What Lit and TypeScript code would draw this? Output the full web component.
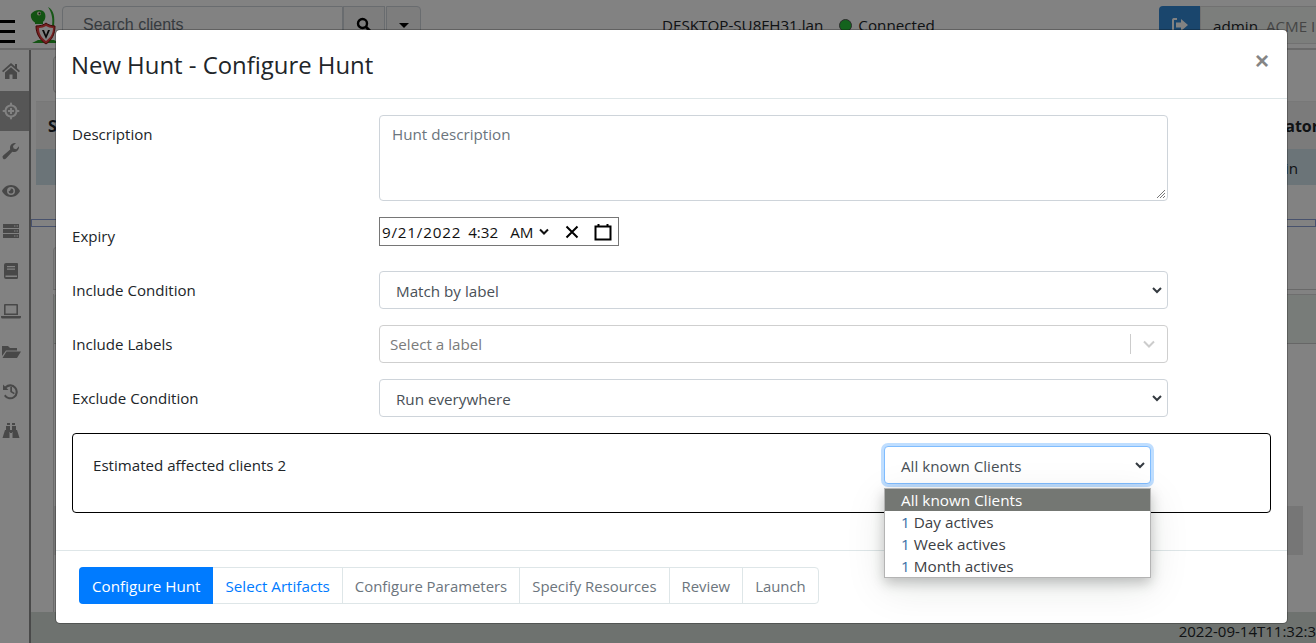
import { LitElement, html, css, svg, unsafeCSS } from "lit";
import { customElement } from "lit/decorators.js";

const FONT = unsafeCSS(`"Open Sans", "Noto Sans", sans-serif`);

const sideIcons = [
  svg`<path d="M10 2 1 10l1.2 1.2L10 4.6l7.8 6.6L19 10l-3-2.7V3h-2v2.6zM4 11.5V18h4.5v-4.5h3V18H16v-6.5L10 6.3z"/>`,
  svg`<path fill-rule="evenodd" d="M10 1.5a1 1 0 0 1 1 1v1.1A6.6 6.6 0 0 1 16.4 9h1.1a1 1 0 0 1 0 2h-1.1a6.6 6.6 0 0 1-5.4 5.4v1.1a1 1 0 0 1-2 0v-1.1A6.6 6.6 0 0 1 3.6 11H2.5a1 1 0 0 1 0-2h1.1A6.6 6.6 0 0 1 9 3.6V2.5a1 1 0 0 1 1-1zM10 5.5a4.5 4.5 0 1 0 0 9 4.5 4.5 0 0 0 0-9zM9 7h2v2h2v2h-2v2H9v-2H7V9h2z"/>`,
  svg`<path d="M18 5.5a5 5 0 0 1-6.700 5.200L5 17.500a2 2 0 0 1-3-.1 2 2 0 0 1 .2-2.800l7-6.200A5 5 0 0 1 15 2l-3 3 .6 2.600 2.600.6 2.800-3z"/>`,
  svg`<path fill-rule="evenodd" d="M10 4c4.300 0 7.600 2.800 9 6-1.400 3.200-4.700 6-9 6s-7.600-2.800-9-6c1.400-3.200 4.700-6 9-6zm0 2a4 4 0 1 0 0 8 4 4 0 0 0 0-8zm-.2 1.500a2.500 2.500 0 1 1-2.300 2.700c.8.500 2.300-.6 2.300-2.700z"/>`,
  svg`<path fill-rule="evenodd" d="M2 3h16v4H2zm0 5h16v4H2zm0 5h16v4H2zM13 4.500v1h1.500v-1zm2.500 0v1H17v-1zM13 9.500v1h1.500v-1zm2.500 0v1H17v-1zM13 14.500v1h1.500v-1zm2.500 0v1H17v-1z"/>`,
  svg`<path fill-rule="evenodd" d="M5 2h11a1 1 0 0 1 1 1v13.500a1.500 1.500 0 0 1-1 1.500H5a2 2 0 0 1-2-2V4a2 2 0 0 1 2-2zm1 3v1.200h8V5zm0 2.500v1.200h8V7.500zM4.500 14.500V16H16v-1.500z"/>`,
  svg`<path fill-rule="evenodd" d="M4 3h12a1 1 0 0 1 1 1v10H3V4a1 1 0 0 1 1-1zm.6 1.500v8h10.800v-8zM0 15h20v1a1.500 1.500 0 0 1-1.500 1.500h-17A1.500 1.500 0 0 1 0 16z"/>`,
  svg`<path d="M1 5h6l2 2h7v2.500H5L1 15zM1.500 17 5.500 10.500H20L16 17z"/>`,
  svg`<path d="M2 3.500 4 5.500A7.500 7.500 0 1 1 3 15l1.500-1.500A5.400 5.400 0 1 0 5.500 7l2 2H2zM9.300 6h1.700v4.200l2.800 1.700-.9 1.400-3.600-2.200z"/>`,
  svg`<path d="M6 2h3v2H6zm5 0h3v2h-3zM5 5h4v6H5zm6 0h4v6h-4zM9 9h2v3H9zM4 9h4.500v8H1.500zm7.500 0H16l2.500 8h-7z"/>`,
];

@customElement("app-root")
export class AppRoot extends LitElement {
  static styles = css`
    :host {
      display: block;
      position: relative;
      width: 1316px;
      height: 643px;
      overflow: hidden;
      font-family: ${FONT};
      background: #fff;
      color: #212529;
    }
    * { box-sizing: border-box; }

    /* page behind the dialog */
    .page { display: flex; flex-direction: column; height: 643px; background: #fff; }
    .nav { height: 50px; display: flex; align-items: flex-start; background: #fff; border-top: 1px solid #fff; border-bottom: 2px solid #d0d0d0; flex: none; }
    .burger { width: 30px; height: 47px; display: flex; flex-direction: column; gap: 7.5px; padding: 19px 0 0 0; flex: none; }
    .burger i { display: block; width: 15px; height: 2.5px; background: #000; }
    .logo { width: 32px; height: 40px; margin: 5px 0 0 0; flex: none; }
    .search { display: flex; margin: 5px 0 0 0; height: 38px; flex: none; }
    .search .inp { width: 281px; border: 1px solid #ced4da; border-radius: 4px 0 0 4px; background: #fff; padding: 9px 20px; font: 16px "Liberation Sans", sans-serif; color: #6c757d; }
    .search .btn { width: 42px; border: 1px solid #ced4da; background: #f5f5f5; display: flex; align-items: center; justify-content: center; }
    .search .cart { width: 35px; margin-left: 1px; border: 1px solid #ced4da; border-radius: 0 4px 4px 0; background: #f5f5f5; display: flex; justify-content: center; align-items: center; }
    .cart i { border: 5px solid transparent; border-top-color: #000; border-bottom: 0; display: block; }
    .host { margin: 14px 0 0 241px; font-size: 15.2px; color: #212529; white-space: nowrap; width: 497px; display: flex; gap: 16px; flex: none; }
    .dot { display: inline-block; width: 13px; height: 13px; background: #28c23a; border-radius: 50%; border: 1px solid #555; margin: 0 6px 0 0; vertical-align: -1px; }
    .logout { width: 41px; height: 38px; background: #3489d6; margin: 5px 0 0 0; border-radius: 4px 0 0 4px; display: flex; justify-content: center; align-items: center; flex: none; }
    .user { flex: none; width: 117px; height: 38px; margin-top: 5px; background: #f4f8f4; border: 1px solid #ddd; font-size: 15.2px; padding: 9px 12px; white-space: nowrap; overflow: hidden; }
    .user span { color: #888; margin-left: 4px; }

    .main { flex: 1; display: flex; min-height: 0; }
    .side { width: 31px; border-right: 2px solid #909090; background: #fff; flex: none; padding-top: 1px; display: flex; flex-direction: column; }
    .side div { height: 40px; display: flex; align-items: center; justify-content: center; padding-right: 8px; }
    .side svg { width: 20px; height: 20px; fill: #8e8e8e; }
    .side div.on { background: #a9a9a9; }
    .side div.on svg { fill: #fff; }
    .content { flex: 1; display: flex; flex-direction: column; min-width: 0; }
    .upper { height: 169px; padding: 51px 0 0 5px; flex: none; position: relative; }
    .tool { position: absolute; left: 22px; top: 6px; width: 40px; height: 37px; border: 1px solid #ccc; border-radius: 4px; background: #f5f5f5; }
    .thead { height: 48px; background: #f2f2f2; border-top: 1px solid #ececec; font-size: 16px; font-weight: 700; color: #212529; display: flex; justify-content: space-between; padding: 13px 0 0 12px; white-space: nowrap; overflow: visible; }
    .thead span:last-child { margin-right: -3px; }
    .trow { height: 36px; background: #d3e4ec; font-size: 15.2px; display: flex; justify-content: flex-end; padding: 9px 18px 0 0; }
    .lower { flex: 1; background: #fff; display: flex; flex-direction: column; min-height: 0; }
    .bluebar { height: 8px; border: 1px solid #8ea2d6; flex: none; }
    .tabs { height: 43px; margin: 20px 0 0 22px; border-bottom: 1px solid #cfcfcf; flex: none; }
    .tab { width: 40px; height: 42px; border: 1px solid #d8d8d8; border-bottom: 0; border-radius: 4px 4px 0 0; background: #f6f6f6; }
    .panel { flex: 1; margin: 4px 0 0 22px; border-left: 1px solid #d0d0d0; display: flex; flex-direction: column; }
    .phead { height: 50px; flex: none; background: #ecf3ee; border-bottom: 1px solid #c8c8c8; border-top: 1px solid #d8d8d8; border-radius: 4px 0 0 0; }
    .pblock { height: 49px; margin: 162px 13px 0 0; background: #e8e8e8; flex: none; }
    .foot { height: 31px; background: #d8e0da; font-size: 15px; text-align: right; white-space: nowrap; flex: none; padding-top: 9px; overflow: hidden; margin-left: 0; }

    /* dialog layer */
    .backdrop { position: absolute; inset: 0; background: rgba(0, 0, 0, 0.49); }
    .modal {
      position: absolute; left: 55px; top: 29px; width: 1233px; height: 595px;
      background: #fff; border-radius: 5px; border: 1px solid rgba(0,0,0,.25);
      display: flex; flex-direction: column; background-clip: padding-box;
    }
    .mhead { height: 69px; flex: none; border-bottom: 1px solid #dee6e8; display: flex; justify-content: space-between; padding: 19px 16px 0 16px; }
    h5 { margin: 0 0 0 -1px; font-size: 23.9px; font-weight: 500; line-height: 32px; color: #212529; }
    .close { font-size: 24px; line-height: 24px; color: #858585; font-weight: 700; font-family: "Liberation Sans", sans-serif; margin: 0 2px 0 0; }
    .mbody { flex: 1; padding: 16px 16px 0 16px; display: flex; flex-direction: column; }
    .row { display: grid; grid-template-columns: 307px 789px; margin-bottom: 16px; }
    .row label { padding-top: 7px; color: #212529; font-size: 15.1px; line-height: 24px; }
    .ctl { height: 38px; border: 1px solid #ced4da; border-radius: 4px; display: flex; align-items: center; justify-content: space-between; padding: 0 4px 0 16px; color: #495057; font-size: 15.2px; background: #fff; }
    .ctl > span:first-child { padding-top: 2px; }
    .ctl svg { width: 10px; height: 10px; fill: none; stroke: #343a40; stroke-width: 2; margin-right: 1px; }
    .area { height: 86px; border: 1px solid #ced4da; border-radius: 4px; padding: 8px 12px; color: #6c757d; font-size: 15.2px; position: relative; }
    .grip { position: absolute; right: 1px; bottom: 1px; width: 10px; height: 10px; }
    .date { width: 240px; height: 29px; border: 1px solid #767676; display: flex; align-items: center; padding-left: 2px; font-size: 15.2px; color: #111; white-space: nowrap; }
    .date .d { letter-spacing: .8px; }
    .date .tm { margin-left: 7px; }
    .date .ap { margin-left: 12px; }
    .date svg { flex: none; }
    .date .chev { margin-left: 5px; }
    .date .clr { margin-left: 15px; }
    .date .cal { margin-left: 15px; }
    .exp { margin-bottom: 23px; }
    .exp label { padding-top: 7px; }
    .labels { padding: 0 0 0 10px; color: #7b7b7b; border-color: #cfcfcf; }
    .labels > span:first-child { padding-top: 0; }
    .labels .r { display: flex; align-items: center; height: 100%; }
    .labels .sep { width: 1px; height: 20px; background: #ccc; margin-right: 12px; }
    .labels svg { stroke: #ccc; margin-right: 12px; width: 12px; height: 12px; }
    .box { height: 80px; border: 1px solid #000; border-radius: 4px; display: grid; grid-template-columns: 791px 267px; padding: 12px 0 0 20px; font-size: 15.1px; }
    .box .lab { padding-top: 7px; line-height: 24px; }
    .sel { position: relative; }
    .focus { border-color: #80bdff; box-shadow: 0 0 0 3px rgba(0,123,255,.25); }
    .menu {
      position: absolute; left: 0; top: 42px; width: 267px; height: 90px;
      background: #fff; border: 1px solid #b4b4b4;
      box-shadow: 0 5px 12px rgba(0,0,0,.22), 0 10px 40px rgba(0,40,20,.1);
      font-size: 15.3px; line-height: 22px; color: #3c4044;
    }
    .menu div { height: 22px; padding-left: 16px; white-space: nowrap; }
    .menu .hl { background: #747773; color: #fff; }
    .menu b { font-weight: 400; color: #3a6ea5; }
    .mfoot { height: 73px; flex: none; border-top: 1px solid #dee6e8; padding: 16px 0 0 23px; display: flex; align-items: flex-start; }
    .steps { display: flex; height: 37px; border: 1px solid #dee6e8; border-radius: 4px; color: #6c757d; }
    .steps span { padding: 0 12px; line-height: 37px; border-left: 1px solid #dee6e8; white-space: nowrap; font-size: 14.9px; }
    .steps span:first-child { border-left: 0; }
    .steps .on { background: #007bff; color: #fff; margin: -1px 0 -1px -1px; border-radius: 4px 0 0 4px; line-height: 39px; padding: 0 13px; height: 37px; font-size: 15.2px; }
    .steps .next { color: #007bff; border-left: 0; padding: 0 12px; font-size: 15.2px; }
  `;

  render() {
    return html`
      <div class="page">
        <div class="nav">
          <div class="burger"><i></i><i></i><i></i></div>
          <svg class="logo" viewBox="0 0 32 40">
            <path d="M18 1c6 3 7 10 6 19h-2c1-7 0-13-4-19z" fill="#2eaa2e"/>
            <path d="M1 8c3-4 9-5 12-3 3 2 3 7 1 10l-3 2H6C3 16 0 12 1 8z" fill="#25a325"/>
            <circle cx="9" cy="7.5" r="2" fill="#e8f4c8"/><circle cx="9.5" cy="7.5" r="1" fill="#222"/>
            <path d="M5 15h8v3H5zM2 37l6-3h16l5 3z" fill="#25a325"/>
            <path d="M6 20c4 0 8-1 10-3 2 2 6 3 9 3 0 8-3 14-9 18-6-4-10-10-10-18z" fill="#e84040" stroke="#7a0f0f"/>
            <path d="M9 22c3 0 5-1 7-2 2 1 4 2 7 2 0 6-3 10-7 13-4-3-7-7-7-13z" fill="#fff"/>
            <path d="m12 24 4 9 4-9h-2l-2 5-2-5z" fill="#111"/>
          </svg>
          <div class="search">
            <div class="inp">Search clients</div>
            <div class="btn"><svg width="16" height="16" viewBox="0 0 16 16"><circle cx="6.5" cy="6.5" r="4.5" fill="none" stroke="#000" stroke-width="2.4"/><path d="m10 10 4.5 4.500" stroke="#000" stroke-width="2.8"/></svg></div>
            <div class="cart"><i></i></div>
          </div>
          <div class="host"><span>DESKTOP-SU8FH31.lan</span><span><i class="dot"></i>Connected</span></div>
          <div class="logout"><svg width="18" height="16" viewBox="0 0 18 16" fill="#fff"><path d="M6 1H2.5A2 2 0 0 0 1 3v10a2 2 0 0 0 1.500 2H6v-2H3V3h3z"/><path d="M10 2l7 6-7 6v-3.500H5v-5h5z"/></svg></div>
          <div class="user">admin <span>ACME Inc</span></div>
        </div>
        <div class="main">
          <div class="side">
            ${sideIcons.map((p, i) => html`<div class=${i === 1 ? "on" : ""}><svg viewBox="0 0 20 20">${p}</svg></div>`)}
          </div>
          <div class="content">
            <div class="upper">
              <div class="tool"></div>
              <div class="thead"><span>S</span><span>ator</span></div>
              <div class="trow"><span>in</span></div>
            </div>
            <div class="lower">
              <div class="bluebar"></div>
              <div class="tabs"><div class="tab"></div></div>
              <div class="panel">
                <div class="phead"></div>
                <div class="pblock"></div>
              </div>
            </div>
            <div class="foot">2022-09-14T11:32:3</div>
          </div>
        </div>
      </div>

      <div class="backdrop"></div>

      <div class="modal">
        <div class="mhead"><h5>New Hunt - Configure Hunt</h5><span class="close">×</span></div>
        <div class="mbody">
          <div class="row">
            <label>Description</label>
            <div class="area">Hunt description
              <svg class="grip" viewBox="0 0 10 10"><path d="M9 1 1 9M9 4 4 9M9 7 7 9" stroke="#555" stroke-width=".8"/></svg>
            </div>
          </div>
          <div class="row exp">
            <label>Expiry</label>
            <div class="date">
              <span class="d">9/21/2022</span><span class="tm">4:32</span><span class="ap">AM</span>
              <svg class="chev" width="12" height="8" viewBox="0 0 12 8"><path d="M2 1.500 6 5.500 10 1.500" fill="none" stroke="#111" stroke-width="2"/></svg>
              <svg class="clr" width="14" height="14" viewBox="0 0 14 14"><path d="M1.500 1.500 12.500 12.500M12.500 1.500 1.500 12.500" stroke="#000" stroke-width="2"/></svg>
              <svg class="cal" width="18" height="18" viewBox="0 0 18 18"><path d="M1.500 3.500h15v13h-15zM4.500 1v3M13.500 1v3" fill="none" stroke="#000" stroke-width="2"/></svg>
            </div>
          </div>
          <div class="row">
            <label>Include Condition</label>
            <div class="ctl"><span>Match by label</span><svg viewBox="0 0 10 10"><path d="M1 3 5 7 9 3"/></svg></div>
          </div>
          <div class="row">
            <label>Include Labels</label>
            <div class="ctl labels"><span>Select a label</span><span class="r"><i class="sep"></i><svg viewBox="0 0 12 12"><path d="M1 3.500 6 8.500 11 3.500"/></svg></span></div>
          </div>
          <div class="row">
            <label>Exclude Condition</label>
            <div class="ctl"><span>Run everywhere</span><svg viewBox="0 0 10 10"><path d="M1 3 5 7 9 3"/></svg></div>
          </div>
          <div class="box">
            <div class="lab">Estimated affected clients 2</div>
            <div class="sel">
              <div class="ctl focus"><span>All known Clients</span><svg viewBox="0 0 10 10"><path d="M1 3 5 7 9 3"/></svg></div>
              <div class="menu">
                <div class="hl">All known Clients</div>
                <div><b>1</b> Day actives</div>
                <div><b>1</b> Week actives</div>
                <div><b>1</b> Month actives</div>
              </div>
            </div>
          </div>
        </div>
        <div class="mfoot">
          <div class="steps">
            <span class="on">Configure Hunt</span>
            <span class="next">Select Artifacts</span>
            <span>Configure Parameters</span>
            <span>Specify Resources</span>
            <span>Review</span>
            <span>Launch</span>
          </div>
        </div>
      </div>
    `;
  }
}
